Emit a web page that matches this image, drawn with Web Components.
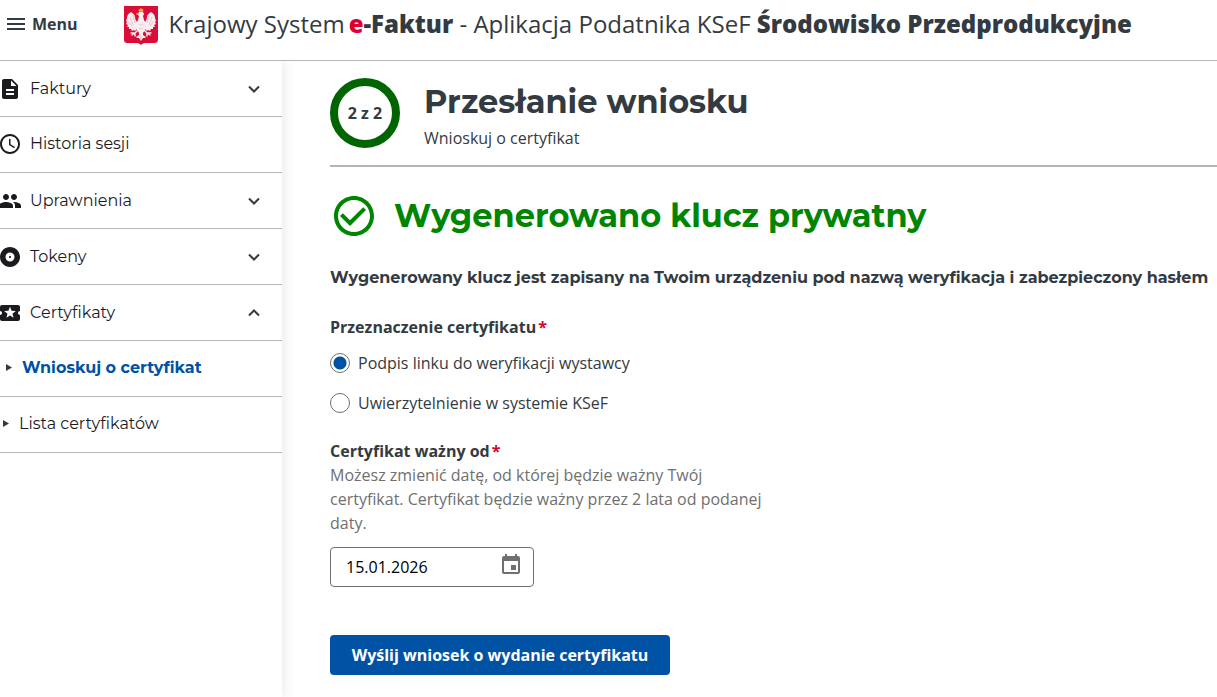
<!DOCTYPE html>
<html lang="pl">
<head>
<meta charset="utf-8">
<meta name="viewport" content="width=device-width, initial-scale=1">
<title>Aplikacja Podatnika KSeF</title>
<style>
  :root {
    --ink: #343a41;
    --black: #1b1b1f;
    --line: #b5b5b5;
    --blue: #0052a5;
    --red: #dc0032;
    --green: #008500;
    --green-dark: #006400;
    --grey: #6f6f6f;
    --display: Montserrat, Inter, sans-serif;
  }
  body {
    margin: 0;
    background: #fff;
    color: var(--ink);
    font: 16px/24px "Open Sans", sans-serif;
  }
</style>
</head>
<body>
<ksef-app>
  <ksef-header slot="header"></ksef-header>
  <ksef-nav slot="nav">
    <nav-item icon="invoice" toggle="closed">Faktury</nav-item>
    <nav-item icon="clock">Historia sesji</nav-item>
    <nav-item icon="people" toggle="closed">Uprawnienia</nav-item>
    <nav-item icon="token" toggle="closed">Tokeny</nav-item>
    <nav-item icon="ticket" toggle="open">Certyfikaty</nav-item>
    <nav-subitem active>Wnioskuj o certyfikat</nav-subitem>
    <nav-subitem>Lista certyfikatów</nav-subitem>
  </ksef-nav>
  <step-header step="2 z 2">
    Przesłanie wniosku
    <span slot="subtitle">Wnioskuj o certyfikat</span>
  </step-header>
  <success-message>
    Wygenerowano klucz prywatny
    <span slot="text">Wygenerowany klucz jest zapisany na Twoim urządzeniu pod nazwą weryfikacja i zabezpieczony hasłem</span>
  </success-message>
  <certificate-form></certificate-form>
</ksef-app>

<script>
const ICONS = {
  invoice: '<path d="M14 2H6c-1.100 0-1.990.9-1.990 2L4 20c0 1.100.89 2 1.990 2H18c1.100 0 2-.9 2-2V8l-6-6zm2 16H8v-2h8v2zm0-4H8v-2h8v2zm-3-5V3.500L18.500 9H13z"/>',
  clock: '<path d="M11.990 2C6.470 2 2 6.480 2 12s4.470 10 9.990 10C17.520 22 22 17.520 22 12S17.520 2 11.990 2zM12 20c-4.420 0-8-3.580-8-8s3.580-8 8-8 8 3.580 8 8-3.580 8-8 8zm.5-13H11v6l5.250 3.150.75-1.230-4.500-2.670z"/>',
  people: '<path d="M16 11c1.660 0 2.990-1.340 2.990-3S17.660 5 16 5s-3 1.340-3 3 1.340 3 3 3zm-8 0c1.660 0 2.990-1.340 2.990-3S9.660 5 8 5 5 6.340 5 8s1.340 3 3 3zm0 2c-2.330 0-7 1.170-7 3.500V19h14v-2.500c0-2.330-4.670-3.500-7-3.500zm8 0c-.29 0-.62.020-.97.050 1.160.84 1.970 1.970 1.970 3.450V19h6v-2.500c0-2.330-4.670-3.500-7-3.500z"/>',
  token: '<path d="M12 2C6.480 2 2 6.480 2 12s4.480 10 10 10 10-4.480 10-10S17.520 2 12 2zm0 14.500c-2.490 0-4.500-2.010-4.500-4.500S9.510 7.500 12 7.500s4.500 2.010 4.500 4.500-2.010 4.500-4.500 4.500zm0-5.500c-.55 0-1 .45-1 1s.45 1 1 1 1-.45 1-1-.45-1-1-1z"/>',
  ticket: '<path d="M20 12c0-1.100.9-2 2-2V6c0-1.100-.9-2-2-2H4c-1.100 0-1.990.9-1.990 2v4c1.100 0 1.990.9 1.990 2s-.89 2-2 2v4c0 1.100.9 2 2 2h16c1.100 0 2-.9 2-2v-4c-1.100 0-2-.9-2-2zm-4.420 4.800L12 14.500l-3.580 2.300 1.080-4.120-3.290-2.690 4.240-.25L12 5.800l1.540 3.950 4.240.25-3.290 2.690 1.090 4.110z"/>',
  closed: '<path d="M7 9.500l5 5 5-5" fill="none" stroke="currentColor" stroke-width="2"/>',
  open: '<path d="M7 14.500l5-5 5 5" fill="none" stroke="currentColor" stroke-width="2"/>',
  check: '<path d="M16.590 7.580L10 14.170l-3.590-3.580L5 12l5 5 8-8zM12 2C6.480 2 2 6.480 2 12s4.480 10 10 10 10-4.480 10-10S17.520 2 12 2zm0 18c-4.420 0-8-3.580-8-8s3.580-8 8-8 8 3.580 8 8-3.580 8-8 8z"/>',
  calendar: '<path d="M17 12h-5v5h5v-5zM16 1v2H8V1H6v2H5c-1.110 0-1.990.9-1.990 2L3 19c0 1.100.89 2 2 2h14c1.100 0 2-.9 2-2V5c0-1.100-.9-2-2-2h-1V1h-2zm3 18H5V8h14v11z"/>'
};

const icon = (name, box = "0 0 24 24") =>
  `<svg class="${name}" viewBox="${box}" fill="currentColor" aria-hidden="true">${ICONS[name]}</svg>`;

class BaseElement extends HTMLElement {
  constructor() {
    super();
    this.attachShadow({ mode: "open" });
  }

  connectedCallback() {
    this.shadowRoot.innerHTML = this.render();
  }
}

class KsefApp extends BaseElement {
  render() {
    return `
      <style>
        :host { display: flex; flex-direction: column; min-height: 100vh; }
        .body { display: flex; flex: 1; }
        main { flex: 1; min-width: 0; padding: 17px 0 16px 48px; }
      </style>
      <slot name="header"></slot>
      <div class="body">
        <slot name="nav"></slot>
        <main><slot></slot></main>
      </div>
    `;
  }
}

class KsefHeader extends BaseElement {
  render() {
    return `
      <style>
        :host {
          display: flex;
          align-items: center;
          gap: 46px;
          height: 60px;
          padding-left: 7px;
          border-bottom: 1px solid var(--line);
        }
        button {
          display: flex;
          align-items: center;
          gap: 7px;
          padding: 0 0 12px;
          border: 0;
          background: none;
          color: inherit;
          font: 700 16px/24px "Open Sans", sans-serif;
        }
        button svg { width: 18px; height: 12px; }
        .brand {
          display: flex;
          align-items: center;
          gap: 11px;
          padding-bottom: 10px;
          color: inherit;
          font-size: 24px;
          line-height: 36px;
          text-decoration: none;
          white-space: nowrap;
        }
        .brand > svg { width: 34px; height: 39px; }
        .brand > span { padding-bottom: 2px; }
        b { font-weight: 800; }
        .name { margin-left: 4px; }
        .e { color: var(--red); }
      </style>
      <button type="button">
        <svg viewBox="0 0 18 12" fill="currentColor" aria-hidden="true"><path d="M0 0h18v2H0zM0 5h18v2H0zM0 10h18v2H0z"/></svg>
        Menu
      </button>
      <a class="brand" href="#">
        <svg viewBox="0 0 34 39" aria-hidden="true">
          <path fill="#dc0c38" d="M0 0h34v33c0 3-1 4-4 4h-9c-2 0-3 1-4 2-1-1-2-2-4-2H4c-3 0-4-1-4-4z"/>
          <g fill="#f7eef0">
            <path d="M14 8l1-2h4l1 2-1 2 1 4 2 4-1 6-2 3h-4l-2-3-1-6 2-4 1-4-1-1z"/>
            <path d="M14 17c-2-2-3-4-3-6 0-2-2-4-4-5-2 1-4 3-4 6l-1 3 1 1-1 2 2 1-1 2 2 0 0 2 2 0 1 2 2-1 1 1 4-4z"/>
            <path d="M20 17c2-2 3-4 3-6 0-2 2-4 4-5 2 1 4 3 4 6l1 3-1 1 1 2-2 1 1 2-2 0 0 2-2 0-1 2-2-1-1 1-4-4z"/>
            <path d="M15 26h4l0 3 3 2-1 1-2 0-2 3-2-3-2 0-1-1 3-2z"/>
          </g>
          <path d="M14 24l-3 3-4 0M11 27l-3 2M11 27l0 3M20 24l3 3 4 0M23 27l3 2M23 27l0 3" fill="none" stroke="#f7eef0" stroke-width="1.400" stroke-linecap="round"/>
          <path d="M6 11l3 8M4 15l4 5M9 9l2 8M28 11l-3 8M30 15l-4 5M25 9l-2 8M15 18l2 1 2-1M15 22l2 1 2-1M17 29v4" fill="none" stroke="#e896a9" stroke-width=".5"/>
          <path d="M15 5.500V3l1 1 1-2 1 2 1-1v2.500zM12 8l2-1v1.500z" fill="#e9b437" stroke="#e9b437" stroke-width=".5"/>
        </svg>
        <span>Krajowy System<b class="name"><span class="e">e</span>-Faktur</b> - Aplikacja Podatnika KSeF <b>Środowisko Przedprodukcyjne</b></span>
      </a>
    `;
  }
}

class KsefNav extends BaseElement {
  render() {
    return `
      <style>
        :host { display: block; flex: 0 0 282px; box-shadow: 2px 0 12px rgb(0 0 0 / 9%); clip-path: inset(0 -16px 0 0); }
      </style>
      <nav><slot></slot></nav>
    `;
  }
}

class NavItem extends BaseElement {
  render() {
    const toggle = this.getAttribute("toggle");
    const tag = toggle ? "button" : "a";
    const attrs = toggle ? `type="button" aria-expanded="${toggle === "open"}"` : 'href="#"';
    return `
      <style>
        :host { display: block; border-bottom: 1px solid var(--line); }
        button, a {
          box-sizing: border-box;
          display: flex;
          align-items: center;
          gap: 10px;
          width: 100%;
          height: 55px;
          padding: 0 16px 0 0;
          border: 0;
          background: none;
          color: var(--black);
          font: 400 16px/24px var(--display);
          text-align: left;
          text-decoration: none;
        }
        a { padding-bottom: 2px; }
        svg { flex: none; width: 20px; height: 20px; overflow: visible; }
        span { flex: 1; }
        .closed, .open { width: 24px; height: 24px; color: var(--ink); }
      </style>
      <${tag} ${attrs}>
        ${icon(this.getAttribute("icon"), "2 2 20 20")}
        <span><slot></slot></span>
        ${toggle ? icon(toggle) : ""}
      </${tag}>
    `;
  }
}

class NavSubitem extends BaseElement {
  render() {
    return `
      <style>
        :host { display: block; border-bottom: 1px solid var(--line); }
        a {
          box-sizing: border-box;
          display: flex;
          align-items: center;
          gap: 10px;
          height: 55px;
          padding: 0 0 2px 3px;
          color: var(--black);
          font: 400 16px/24px var(--display);
          text-decoration: none;
        }
        svg { width: 6px; height: 7px; color: var(--ink); }
        :host([active]) a { padding-left: 6px; color: var(--blue); font-weight: 700; }
      </style>
      <a href="#">
        <svg viewBox="0 0 6 7" fill="currentColor" aria-hidden="true"><path d="M0 0l6 3.500L0 7z"/></svg>
        <slot></slot>
      </a>
    `;
  }
}

class StepHeader extends BaseElement {
  render() {
    return `
      <style>
        :host {
          display: flex;
          gap: 24px;
          padding-bottom: 15px;
          border-bottom: 2px solid var(--line);
        }
        .step {
          box-sizing: border-box;
          display: grid;
          place-items: center;
          width: 70px;
          height: 70px;
          border: 8px solid var(--green-dark);
          border-radius: 50%;
          font-weight: 700;
        }
        h1 { margin: 4px 0; font: 700 32px/40px var(--display); }
        p { margin: 0; }
      </style>
      <div class="step">${this.getAttribute("step")}</div>
      <div>
        <h1><slot></slot></h1>
        <p><slot name="subtitle"></slot></p>
      </div>
    `;
  }
}

class SuccessMessage extends BaseElement {
  render() {
    return `
      <style>
        :host { display: block; padding-top: 25px; }
        h2 {
          display: flex;
          align-items: center;
          gap: 16px;
          margin: 0 0 26px;
          color: var(--green);
          font: 700 32px/48px var(--display);
        }
        svg { width: 48px; height: 48px; }
        p { margin: 0; font: 700 16px/24px var(--display); }
      </style>
      <h2>${icon("check")}<slot></slot></h2>
      <p><slot name="text"></slot></p>
    `;
  }
}

class CertificateForm extends BaseElement {
  render() {
    return `
      <style>
        :host { display: block; padding-top: 25px; }
        fieldset { display: grid; gap: 16px; margin: 0 0 24px; padding: 0; border: 0; }
        legend { margin-bottom: 12px; padding: 0; }
        legend, .title { font-weight: 700; }
        .req { margin-left: 2px; color: var(--red); }
        .radio { display: flex; align-items: center; gap: 8px; }
        .radio input {
          appearance: none;
          width: 20px;
          height: 20px;
          margin: 0;
          border: 1px solid var(--grey);
          border-radius: 50%;
        }
        .radio input:checked { background: radial-gradient(circle, var(--blue) 6px, transparent 7px); }
        .title { display: block; }
        .help { max-width: 440px; margin: 0 0 12px; color: var(--grey); }
        .date {
          box-sizing: border-box;
          display: flex;
          width: 204px;
          height: 40px;
          border: 1px solid var(--grey);
          border-radius: 4px;
        }
        .date input {
          flex: 1;
          min-width: 0;
          padding: 0 0 0 15px;
          border: 0;
          background: none;
          color: #000;
          font: inherit;
        }
        .date button {
          padding: 4px 10px 8px 0;
          border: 0;
          background: none;
          color: var(--grey);
        }
        .date svg { display: block; width: 24px; height: 24px; }
        .submit {
          display: block;
          min-width: 340px;
          height: 40px;
          margin-top: 48px;
          padding: 0 16px;
          border: 0;
          border-radius: 4px;
          background: var(--blue);
          color: #fff;
          font: 700 16px/24px "Open Sans", sans-serif;
        }
      </style>
      <form>
        <fieldset>
          <legend>Przeznaczenie certyfikatu<span class="req">*</span></legend>
          <label class="radio"><input type="radio" name="purpose" checked>Podpis linku do weryfikacji wystawcy</label>
          <label class="radio"><input type="radio" name="purpose">Uwierzytelnienie w systemie KSeF</label>
        </fieldset>
        <label class="title" for="from">Certyfikat ważny od<span class="req">*</span></label>
        <p class="help" id="help">Możesz zmienić datę, od której będzie ważny Twój certyfikat. Certyfikat będzie ważny przez 2 lata od podanej daty.</p>
        <div class="date">
          <input id="from" type="text" value="15.01.2026" aria-describedby="help">
          <button type="button" aria-labelledby="from">${icon("calendar")}</button>
        </div>
        <button class="submit" type="submit">Wyślij wniosek o wydanie certyfikatu</button>
      </form>
    `;
  }
}

customElements.define("ksef-app", KsefApp);
customElements.define("ksef-header", KsefHeader);
customElements.define("ksef-nav", KsefNav);
customElements.define("nav-item", NavItem);
customElements.define("nav-subitem", NavSubitem);
customElements.define("step-header", StepHeader);
customElements.define("success-message", SuccessMessage);
customElements.define("certificate-form", CertificateForm);
</script>
</body>
</html>
